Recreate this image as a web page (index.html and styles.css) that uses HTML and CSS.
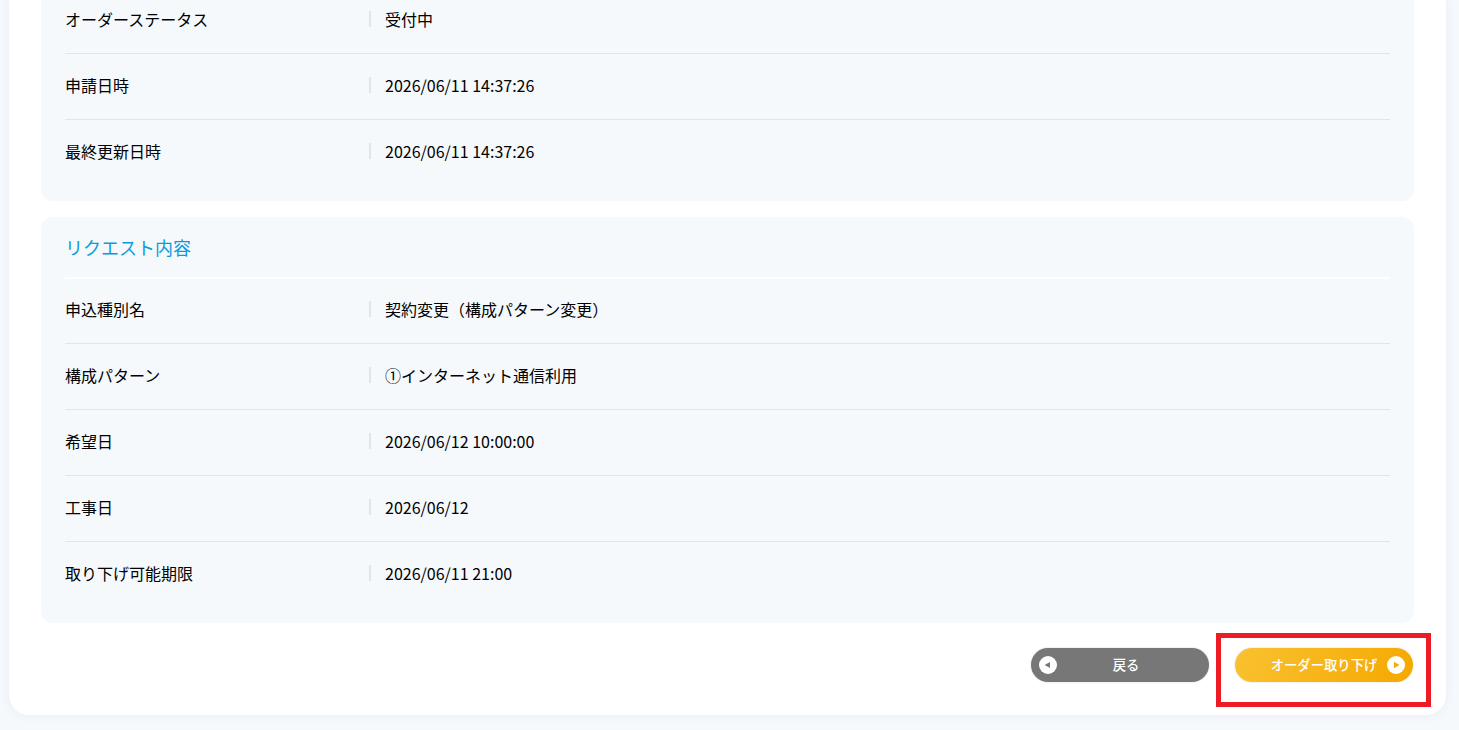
FILE: index.html
```html
<!DOCTYPE html>
<html lang="ja">
<head>
  <meta charset="UTF-8">
  <title>オーダー詳細</title>
  <meta name="viewport" content="width=device-width, initial-scale=1.0">
  <link rel="stylesheet" href="styles.css">
</head>
<body>

<main class="card">
  <!-- ORDER STATUS -->
  <section class="panel panel-top">
    <dl class="list">
      <div class="row">
        <dt>オーダーステータス</dt>
        <dd>受付中</dd>
      </div>
      <div class="row">
        <dt>申請日時</dt>
        <dd>2026/06/11 14:37:26</dd>
      </div>
      <div class="row">
        <dt>最終更新日時</dt>
        <dd>2026/06/11 14:37:26</dd>
      </div>
    </dl>
  </section>

  <!-- REQUEST -->
  <section class="panel">
    <h2>リクエスト内容</h2>
    <dl class="list">
      <div class="row">
        <dt>申込種別名</dt>
        <dd>契約変更（構成パターン変更）</dd>
      </div>
      <div class="row">
        <dt>構成パターン</dt>
        <dd>①インターネット通信利用</dd>
      </div>
      <div class="row">
        <dt>希望日</dt>
        <dd>2026/06/12 10:00:00</dd>
      </div>
      <div class="row">
        <dt>工事日</dt>
        <dd>2026/06/12</dd>
      </div>
      <div class="row">
        <dt>取り下げ可能期限</dt>
        <dd>2026/06/11 21:00</dd>
      </div>
    </dl>
  </section>

  <div class="actions">
    <button type="button" class="btn btn-back">
      <svg class="icon" viewBox="0 0 18 18" aria-hidden="true"><circle cx="9" cy="9" r="9" fill="#fff"/><path d="M5.7 9 11 6v6z" fill="#777"/></svg>
      <span>戻る</span>
    </button>
    <div class="highlight">
      <button type="button" class="btn btn-cancel">
        <span>オーダー取り下げ</span>
        <svg class="icon" viewBox="0 0 18 18" aria-hidden="true"><circle cx="9" cy="9" r="9" fill="#fff"/><path d="M12.5 9 7 5.8v6.4z" fill="#f6ab05"/></svg>
      </button>
    </div>
  </div>
</main>

</body>
</html>
```

FILE: styles.css
```css
* { box-sizing: border-box; }

body {
  margin: 0;
  padding: 0 13px 15px 9px;
  background: #f5f9fc;
  color: #000;
  font-family: "Noto Sans CJK JP", sans-serif;
  font-size: 16px;
  line-height: 24px;
}

.card {
  padding: 0 32px 32px;
  background: #fff;
  border-radius: 0 0 20px 20px;
  box-shadow: 0 0 10px rgba(60, 90, 160, 0.08);
}

.panel {
  margin-bottom: 16px;
  padding: 16px 24px;
  background: #f5f9fc;
  border-radius: 12px;
}

.panel-top {
  padding-top: 0;
  border-radius: 0 0 12px 12px;
}

h2 {
  margin: 0 0 -1px;
  padding: 2px 0 18px;
  border-bottom: 2px solid #fff;
  color: #0a9bdc;
  font-size: 18px;
  font-weight: 400;
}

.list { margin: 0; }

.row {
  display: flex;
  padding: 19px 0 22px;
  border-bottom: 1px solid #e1e5e9;
}

.row:last-child { border-bottom: 0; }

.panel-top .row:first-child { padding-top: 7px; }

dt { flex: 0 0 304px; }

dd {
  flex: 1;
  margin: 0;
  padding-left: 16px;
  background: linear-gradient(#e1e5e9, #e1e5e9) 0 4px / 2px 16px no-repeat;
}

.actions {
  display: flex;
  justify-content: flex-end;
  gap: 26px;
  padding: 9px 1px 1px 0;
}

.btn {
  display: flex;
  align-items: center;
  width: 178px;
  height: 34px;
  padding: 0 8px;
  border: none;
  border-radius: 17px;
  color: #fff;
  font-family: inherit;
  font-weight: 500;
  box-shadow: 0 0 2px rgba(0, 0, 0, 0.2);
  cursor: pointer;
}

.btn span {
  flex: 1;
  padding-bottom: 2px;
  text-align: center;
}

.btn-back {
  padding-right: 14px;
  background: #777;
}

.btn-cancel {
  padding-left: 26px;
  background: linear-gradient(120deg, #f9c231, #f5a800);
}

.icon {
  width: 18px;
  height: 18px;
}

.highlight { position: relative; }

/* red frame round the cancel button */
.highlight::after {
  content: "";
  position: absolute;
  top: -15px;
  right: -18px;
  bottom: -25px;
  left: -19px;
  border: 5px solid #ed1c24;
  pointer-events: none;
}
```
